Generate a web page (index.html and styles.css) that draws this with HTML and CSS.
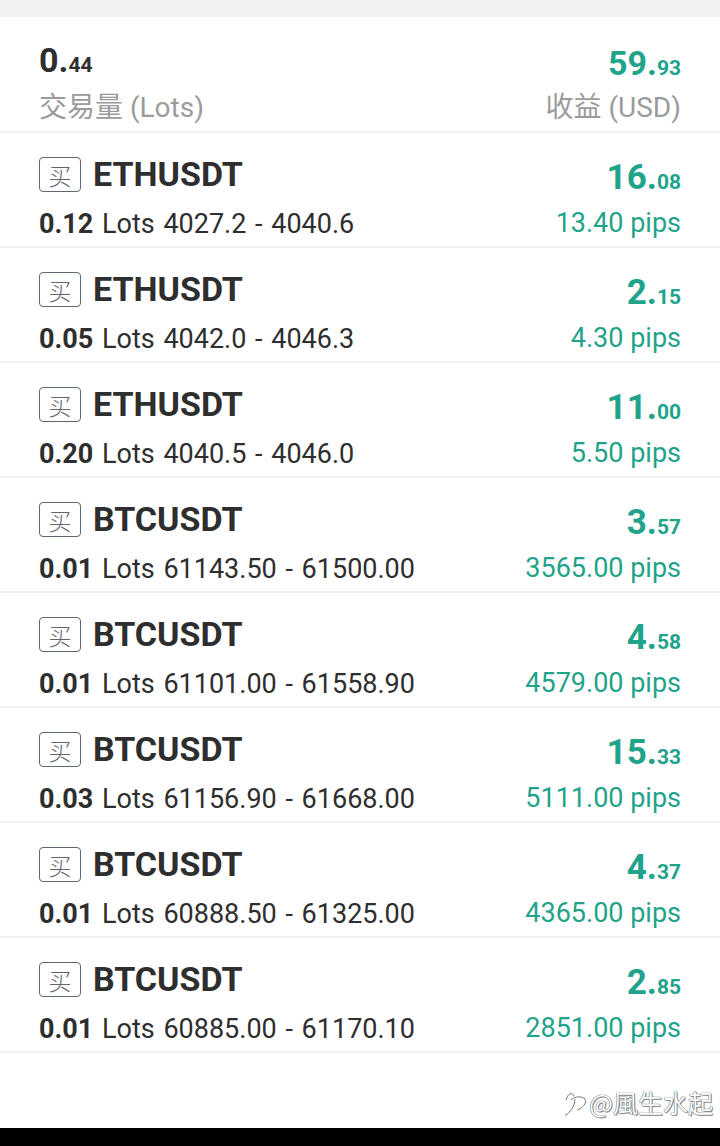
FILE: index.html
```html
<!DOCTYPE html>
<html lang="zh">
<head>
<meta charset="utf-8">
<link rel="stylesheet" href="styles.css">
</head>
<body>
<div class="topband"></div>
<div class="card">
  <div class="summary">
    <div class="col">
      <div class="sumval dark"><span class="big">0.</span><span class="small">44</span></div>
      <div class="label">交易量 (Lots)</div>
    </div>
    <div class="col right shift">
      <div class="sumval green"><span class="big">59.</span><span class="small">93</span></div>
      <div class="label">收益 (USD)</div>
    </div>
  </div>

  <div class="row">
    <div class="col">
      <div class="line1"><span class="tag">买</span><span class="sym">ETHUSDT</span></div>
      <div class="line2"><b>0.12</b> Lots 4027.2 - 4040.6</div>
    </div>
    <div class="col right">
      <div class="val"><span class="vbig">16.</span><span class="vsmall">08</span></div>
      <div class="pips">13.40 pips</div>
    </div>
  </div>
  <div class="row">
    <div class="col">
      <div class="line1"><span class="tag">买</span><span class="sym">ETHUSDT</span></div>
      <div class="line2"><b>0.05</b> Lots 4042.0 - 4046.3</div>
    </div>
    <div class="col right">
      <div class="val"><span class="vbig">2.</span><span class="vsmall">15</span></div>
      <div class="pips">4.30 pips</div>
    </div>
  </div>
  <div class="row">
    <div class="col">
      <div class="line1"><span class="tag">买</span><span class="sym">ETHUSDT</span></div>
      <div class="line2"><b>0.20</b> Lots 4040.5 - 4046.0</div>
    </div>
    <div class="col right">
      <div class="val"><span class="vbig">11.</span><span class="vsmall">00</span></div>
      <div class="pips">5.50 pips</div>
    </div>
  </div>
  <div class="row">
    <div class="col">
      <div class="line1"><span class="tag">买</span><span class="sym">BTCUSDT</span></div>
      <div class="line2"><b>0.01</b> Lots 61143.50 - 61500.00</div>
    </div>
    <div class="col right">
      <div class="val"><span class="vbig">3.</span><span class="vsmall">57</span></div>
      <div class="pips">3565.00 pips</div>
    </div>
  </div>
  <div class="row">
    <div class="col">
      <div class="line1"><span class="tag">买</span><span class="sym">BTCUSDT</span></div>
      <div class="line2"><b>0.01</b> Lots 61101.00 - 61558.90</div>
    </div>
    <div class="col right">
      <div class="val"><span class="vbig">4.</span><span class="vsmall">58</span></div>
      <div class="pips">4579.00 pips</div>
    </div>
  </div>
  <div class="row">
    <div class="col">
      <div class="line1"><span class="tag">买</span><span class="sym">BTCUSDT</span></div>
      <div class="line2"><b>0.03</b> Lots 61156.90 - 61668.00</div>
    </div>
    <div class="col right">
      <div class="val"><span class="vbig">15.</span><span class="vsmall">33</span></div>
      <div class="pips">5111.00 pips</div>
    </div>
  </div>
  <div class="row">
    <div class="col">
      <div class="line1"><span class="tag">买</span><span class="sym">BTCUSDT</span></div>
      <div class="line2"><b>0.01</b> Lots 60888.50 - 61325.00</div>
    </div>
    <div class="col right">
      <div class="val"><span class="vbig">4.</span><span class="vsmall">37</span></div>
      <div class="pips">4365.00 pips</div>
    </div>
  </div>
  <div class="row">
    <div class="col">
      <div class="line1"><span class="tag">买</span><span class="sym">BTCUSDT</span></div>
      <div class="line2"><b>0.01</b> Lots 60885.00 - 61170.10</div>
    </div>
    <div class="col right">
      <div class="val"><span class="vbig">2.</span><span class="vsmall">85</span></div>
      <div class="pips">2851.00 pips</div>
    </div>
  </div>

  <div class="footer">
    <div class="watermark">
      <svg class="wm-logo" width="26" height="28" viewBox="0 0 26 28">
        <path d="M4 12 C6 5 10 4 12 8 C14 12 12 18 9 22 C7 25 5 27 3 27" fill="none" stroke="#fff" stroke-width="3"/>
        <path d="M4 12 C6 5 10 4 12 8 C14 12 12 18 9 22 C7 25 5 27 3 27" fill="none" stroke="#777" stroke-width="1"/>
        <path d="M9 12 C13 8 20 8 23 11 C25 15 21 20 15 22" fill="none" stroke="#fff" stroke-width="3"/>
        <path d="M9 12 C13 8 20 8 23 11 C25 15 21 20 15 22" fill="none" stroke="#777" stroke-width="1"/>
      </svg>
      <span class="wm-text">@風生水起</span>
    </div>
  </div>
</div>
<div class="bottombar"></div>
</body>
</html>
```

FILE: styles.css
```css
html, body {
  margin: 0;
  padding: 0;
  background: #ffffff;
}
body {
  width: 720px;
  font-family: Roboto, "Noto Sans CJK SC", sans-serif;
  color: #2e2e2e;
}
.topband {
  height: 17px;
  background: #f2f2f2;
}
.card {
  background: #ffffff;
}
.summary {
  box-sizing: border-box;
  border-bottom: 2px solid #f1f1f1;
  padding: 23px 39px 0 39px;
  display: flex;
  justify-content: space-between;
  align-items: flex-start;
  height: 116px;
}
.col {
  display: flex;
  flex-direction: column;
}
.col.right {
  align-items: flex-end;
}
.col.shift {
  padding-top: 3px;
}
.sumval {
  height: 40px;
  line-height: 40px;
  font-weight: 700;
  white-space: nowrap;
}
.dark { color: #2e2e2e; }
.green { color: #1fa38a; }
.sumval .big { font-size: 34px; }
.sumval .small { font-size: 21px; }
.label {
  margin-top: 12px;
  font-size: 28px;
  line-height: 32px;
  color: #9b9b9b;
  white-space: nowrap;
}
.shift .label {
  margin-top: 9px;
}
.row {
  height: 115px;
  box-sizing: border-box;
  border-bottom: 2px solid #f1f1f1;
  padding: 0 39px;
  display: flex;
  justify-content: space-between;
  align-items: flex-start;
}
.row > .col {
  padding-top: 24px;
}
.row > .col.right {
  padding-top: 25px;
}
.line1 {
  display: flex;
  align-items: center;
  height: 35px;
}
.tag {
  width: 42px;
  height: 35px;
  box-sizing: border-box;
  border: 1.5px solid #5f6872;
  border-radius: 4px;
  display: flex;
  align-items: center;
  justify-content: center;
  font-family: "Noto Sans CJK SC", sans-serif;
  font-size: 23px;
  font-weight: 300;
  color: #5f6670;
  margin-right: 12px;
}
.sym {
  font-size: 34px;
  font-weight: 700;
  line-height: 35px;
  color: #2e2e2e;
}
.line2 {
  margin-top: 16px;
  font-size: 27px;
  line-height: 32px;
  color: #2e2e2e;
  white-space: nowrap;
  word-spacing: 2px;
}
.line2 b {
  font-weight: 700;
}
.val {
  height: 40px;
  line-height: 40px;
  font-weight: 700;
  color: #1fa38a;
  white-space: nowrap;
}
.vbig { font-size: 35px; }
.vsmall { font-size: 21px; }
.pips {
  margin-top: 9px;
  font-size: 27px;
  line-height: 32px;
  color: #1fa38a;
  white-space: nowrap;
}
.footer {
  height: 75px;
  display: flex;
  justify-content: flex-end;
  align-items: flex-start;
  padding-right: 7px;
}
.watermark {
  margin-top: 34px;
  display: flex;
  align-items: center;
  gap: 1px;
}
.wm-text {
  font-family: "Noto Sans CJK SC", sans-serif;
  font-size: 25px;
  line-height: 30px;
  color: #ffffff;
  text-shadow: 0 0 1px #555, 0 0 1px #555, 1px 1px 0 #999;
}
.bottombar {
  height: 18px;
  background: #000000;
}
```
